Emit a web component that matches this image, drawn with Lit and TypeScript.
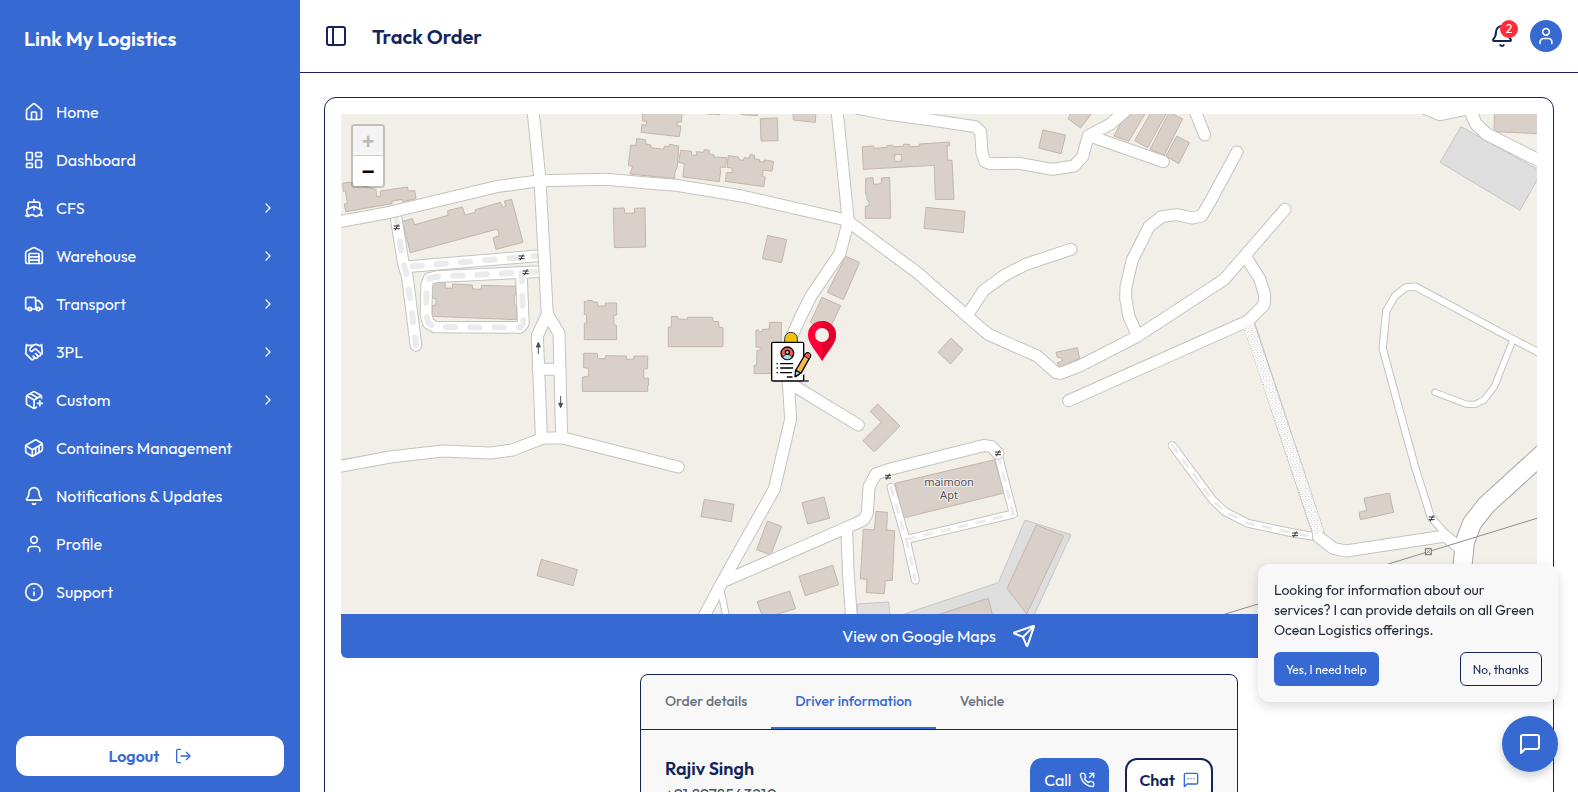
import { LitElement, html, svg, css } from "lit";
import { customElement, property, state } from "lit/decorators.js";
import { classMap } from "lit/directives/class-map.js";

const icons: Record<string, unknown> = {
  home: svg`<path d="M15 21v-8a1 1 0 0 0-1-1h-4a1 1 0 0 0-1 1v8"/><path d="M3 10a2 2 0 0 1 .709-1.528l7-6a2 2 0 0 1 2.582 0l7 6A2 2 0 0 1 21 10v9a2 2 0 0 1-2 2H5a2 2 0 0 1-2-2z"/>`,
  dashboard: svg`<rect width="7" height="9" x="3" y="3" rx="1"/><rect width="7" height="5" x="14" y="3" rx="1"/><rect width="7" height="9" x="14" y="12" rx="1"/><rect width="7" height="5" x="3" y="16" rx="1"/>`,
  ship: svg`<path d="M12 10.189V14"/><path d="M12 2v3"/><path d="M19 13V7a2 2 0 0 0-2-2H7a2 2 0 0 0-2 2v6"/><path d="M19.38 20A11.6 11.6 0 0 0 21 14l-8.188-3.639a2 2 0 0 0-1.624 0L3 14a11.6 11.6 0 0 0 2.81 7.76"/><path d="M2 21c.6.5 1.2 1 2.5 1 2.5 0 2.5-2 5-2 1.3 0 1.9.5 2.5 1s1.2 1 2.5 1c2.5 0 2.5-2 5-2 1.3 0 1.9.5 2.5 1"/>`,
  warehouse: svg`<path d="M18 21V10a1 1 0 0 0-1-1H7a1 1 0 0 0-1 1v11"/><path d="M22 19a2 2 0 0 1-2 2H4a2 2 0 0 1-2-2V8a2 2 0 0 1 1.132-1.803l7.95-3.974a2 2 0 0 1 1.837 0l7.948 3.974A2 2 0 0 1 22 8z"/><path d="M6 13h12"/><path d="M6 17h12"/>`,
  truck: svg`<path d="M14 18V6a2 2 0 0 0-2-2H4a2 2 0 0 0-2 2v11a1 1 0 0 0 1 1h2"/><path d="M15 18H9"/><path d="M19 18h2a1 1 0 0 0 1-1v-3.65a1 1 0 0 0-.22-.624l-3.48-4.35A1 1 0 0 0 17.52 8H14"/><circle cx="17" cy="18" r="2"/><circle cx="7" cy="18" r="2"/>`,
  handshake: svg`<path d="m11 17 2 2a1 1 0 1 0 3-3"/><path d="m14 14 2.5 2.5a1 1 0 1 0 3-3l-3.88-3.88a3 3 0 0 0-4.24 0l-.88.88a1 1 0 1 1-3-3l2.81-2.81a5.79 5.79 0 0 1 7.06-.87l.47.28a2 2 0 0 0 1.42.25L21 4"/><path d="m21 3 1 11h-2"/><path d="M3 3 2 14l6.5 6.5a1 1 0 1 0 3-3"/><path d="M3 4h8"/>`,
  package: svg`<path d="M16 16h6"/><path d="M19 13v6"/><path d="M21 10V8a2 2 0 0 0-1-1.73l-7-4a2 2 0 0 0-2 0l-7 4A2 2 0 0 0 3 8v8a2 2 0 0 0 1 1.73l7 4a2 2 0 0 0 2 0l2-1.14"/><path d="m7.5 4.27 9 5.15"/><path d="M3.29 7 12 12l8.71-5"/><path d="M12 22V12"/>`,
  container: svg`<path d="M22 7.7c0-.6-.4-1.2-.8-1.5l-6.3-3.9a1.72 1.72 0 0 0-1.7 0l-10.3 6c-.5.2-.9.8-.9 1.4v6.6c0 .5.4 1.2.8 1.5l6.3 3.9a1.72 1.72 0 0 0 1.7 0l10.3-6c.5-.3.9-1 .9-1.5Z"/><path d="M10 21.9V14L2.1 9.1"/><path d="m10 14 11.9-6.9"/><path d="M14 19.8v-8.1"/><path d="M18 17.5V9.4"/>`,
  bell: svg`<path d="M10.268 21a2 2 0 0 0 3.464 0"/><path d="M3.262 15.326A1 1 0 0 0 4 17h16a1 1 0 0 0 .74-1.673C19.41 13.956 18 12.499 18 8A6 6 0 0 0 6 8c0 4.499-1.411 5.956-2.738 7.326"/>`,
  user: svg`<path d="M19 21v-2a4 4 0 0 0-4-4H9a4 4 0 0 0-4 4v2"/><circle cx="12" cy="7" r="4"/>`,
  info: svg`<circle cx="12" cy="12" r="10"/><path d="M12 16v-4"/><path d="M12 8h.01"/>`,
  chevron: svg`<path d="m9 18 6-6-6-6"/>`,
  logout: svg`<path d="M8 2H4.500a2 2 0 0 0-2 2v16a2 2 0 0 0 2 2H8"/><path d="M9 12h13"/><path d="m17 6.500 5.500 5.500-5.500 5.500"/>`,
  panel: svg`<rect width="18" height="18" x="3" y="3" rx="2"/><path d="M9 3v18"/>`,
  send: svg`<path d="M14.536 21.686a.5.5 0 0 0 .937-.024l6.5-19a.496.496 0 0 0-.635-.635l-19 6.5a.5.5 0 0 0-.024.937l7.93 3.18a2 2 0 0 1 1.112 1.11z"/><path d="m21.854 2.147-10.94 10.939"/>`,
  phone: svg`<path d="m16 8 6-6"/><path d="M22 8V2h-6"/><path d="M22 16.92v3a2 2 0 0 1-2.18 2 19.79 19.79 0 0 1-8.63-3.07 19.5 19.5 0 0 1-6-6 19.79 19.79 0 0 1-3.07-8.67A2 2 0 0 1 4.11 2h3a2 2 0 0 1 2 1.72 12.84 12.84 0 0 0 .7 2.81 2 2 0 0 1-.45 2.11L8.09 9.91a16 16 0 0 0 6 6l1.27-1.27a2 2 0 0 1 2.11-.45 12.84 12.84 0 0 0 2.81.7A2 2 0 0 1 22 16.92z"/>`,
  message: svg`<path d="M21 15a2 2 0 0 1-2 2H7l-4 4V5a2 2 0 0 1 2-2h14a2 2 0 0 1 2 2z"/>`,
  messageDots: svg`<path d="M22 16a2 2 0 0 1-2 2H6l-4 4V4a2 2 0 0 1 2-2h16a2 2 0 0 1 2 2z"/><path d="M7.500 10h.01M12 10h.01M16.500 10h.01"/>`,
};

const icon = (name: string, size = 20) => html`<svg
  class="icon" width=${size} height=${size} viewBox="0 0 24 24" fill="none"
  stroke="currentColor" stroke-width="2" stroke-linecap="round"
  stroke-linejoin="round" aria-hidden="true">${icons[name]}</svg>`;

/* ---- Map geometry. One map unit is a third of a CSS pixel. ---- */

interface Road { d: string; w: number; edge?: string; butt?: boolean }

const roads: Road[] = [
  { w: 36, d: "990,670 1165,638 1490,560 1620,542 1820,538 1950,550 2030,556 2225,588 2526,657 2545,665 2752,818 2940,982 2965,1003 3038,1036 3112,1068 3168,1118 3182,1120 3243,1096 3410,1010 3672,839 3855,628" },
  { w: 36, d: "1597,310 1620,540 1642,945" },
  { w: 36, d: "1642,942 1612,1007 1624,1306" },
  { w: 36, d: "1642,942 1677,1000 1685,1313" },
  { w: 36, d: "1614,1108 1680,1108" },
  { w: 36, d: "1000,1403 1170,1371 1328,1353 1472,1359 1537,1350 1627,1315 1685,1313 2035,1401" },
  { w: 36, d: "2510,320 2545,665 2520,760 2433,888 2402,950 2375,1010 2362,1090 2365,1150 2372,1257 2323,1467 2170,1740 2095,1880" },
  { w: 36, d: "2370,1150 2575,1275" },
  { w: 36, d: "2180,1740 2535,1585 2590,1560 2602,1540 2607,1460 2628,1422 2665,1409 2953,1336 2975,1340 2994,1360" },
  { w: 35, d: "2540,1585 2545,1720 2555,1860" },
  { w: 20, d: "2162,1770 2185,1880" },
  { w: 36, d: "2560,322 2660,342 2780,358 2925,380 2942,395 2946,460 2955,485 2970,491 3057,490 3158,508 3222,498 3248,470 3265,407 3330,373 3385,325" },
  { w: 36, d: "3275,410 3490,485" },
  { w: 36, d: "3580,320 3614,405" },
  { w: 36, d: "3711,456 3637,593 3605,648 3577,654 3530,644 3485,650 3447,680 3396,782 3378,860 3377,895 3387,950 3411,1003" },
  { w: 36, d: "3213,748 3080,792 3015,825 2950,872 2907,938" },
  { w: 36, d: "3740,775 3780,838 3794,885 3792,915 3745,962 3206,1202" },
  { w: 36, d: "3955,1610 4000,1645 4038,1653 4335,1608 4375,1640" },
  { w: 22, d: "4340,1605 4292,1550 4245,1400 4190,1200 4148,1045 4159,932 4185,888 4218,862 4247,860 4540,1018 4630,1065" },
  { w: 19, d: "4538,1022 4483,1160 4452,1200 4425,1213 4400,1213 4305,1177" },
  { w: 38, d: "4240,310 4320,343 4420,322" },
  { w: 38, d: "4405,320 4428,372 4460,402 4640,493" },
  { w: 57, edge: "#a8a8a6", butt: true, d: "4650,1341 4458,1516 4416,1570 4395,1625 4383,1740" },
];

const serviceRoads: Road[] = [
  { w: 35, d: "1186,640 1210,790 1222,830 1248,1036" },
  { w: 35, d: "1225,800 1618,767" },
  { w: 35, d: "1618,815 1310,830 1287,836 1280,855 1278,945 1286,970 1305,981 1560,982 1570,970 1564,820" },
];

const lanes: Road[] = [
  { w: 24, d: "2673,1462 2720,1625 2746,1740" },
  { w: 24, d: "2720,1618 3040,1542 2996,1370" },
  { w: 24, d: "3517,1337 3638,1500 3675,1535 3744,1570 3880,1599 3945,1610" },
];

const blocks: { x: number; y: number; shapes: string[] }[] = [
  { x: 960, y: 0, shapes: [
    "68,550 88,547 168,568 170,590 182,588 181,573 262,561 265,573 284,572 288,596 248,605 248,598 216,603 216,611 77,635 73,612 82,608 76,572 70,574",
    "247,664 277,656 284,674 384,646 383,632 427,621 435,645 466,637 466,629 541,607 547,622 557,618 553,603 575,598 609,727 528,748 519,713 538,707 533,687 271,758",
    "337,847 375,848 376,864 397,865 398,852 457,855 458,867 484,868 485,856 588,859 587,885 582,886 584,915 590,916 590,959 337,949 337,916 348,915 348,896 337,895",
    "880,625 913,624 914,640 944,639 943,625 975,624 977,741 883,743",
    "793,905 800,905 802,901 817,902 819,906 832,906 834,918 856,918 856,909 890,909 890,945 881,946 882,975 889,976 890,1019 793,1019 793,970 800,968 800,945 793,943",
  ] },
  { x: 990, y: 900, shapes: [
    "761,160 802,160 803,176 826,176 827,167 889,168 890,178 911,178 912,168 953,168 953,206 941,207 941,234 956,235 955,257 953,257 953,274 757,274 757,232 776,228 776,205 761,203",
    "634,778 742,809 729,857 621,827",
  ] },
  { x: 1920, y: 270, shapes: [
    "8,60 127,60 124,96 112,96 111,107 123,109 118,140 3,127 6,103 18,106 21,94 8,93",
    "-10,146 16,149 18,162 33,165 33,173 70,178 74,168 86,170 88,163 116,168 112,230 105,245 103,266 -30,252 -22,230 -35,226 -28,165 -12,166",
    "122,181 154,184 155,195 170,196 170,185 190,187 193,179 208,181 207,192 222,194 222,201 260,203 257,232 240,231 242,242 238,275 129,261 133,221 116,217",
    "265,197 295,201 297,209 311,211 312,203 328,205 330,194 344,196 343,206 358,209 359,215 372,216 373,210 401,214 396,244 369,240 368,258 376,262 371,290 256,274 259,248 276,248 277,235 261,232",
    "361,86 412,84 414,152 363,153",
    "459,62 528,62 526,97 460,90",
    "200,60 240,60 240,74 200,72",
    "305,60 352,60 352,77 305,74",
    "667,170 701,168 702,175 740,172 742,167 758,165 760,170 790,169 791,163 808,163 810,170 837,169 838,162 928,156 929,167 921,168 923,211 936,211 942,328 886,328 883,226 670,238",
    "677,265 699,263 701,283 724,281 724,264 749,262 752,385 676,385 676,350 687,346 687,335 681,330 681,318 677,314",
    "858,352 975,364 970,428 852,415",
    "383,436 440,449 425,518 367,506",
    "617,499 659,517 610,629 562,607",
    "546,622 602,647 575,705 540,715 511,697",
    "94,680 112,679 114,687 142,688 143,682 218,682 219,694 236,695 237,712 249,713 249,770 85,770 85,712 94,711",
    "348,722 355,719 358,725 367,725 367,718 388,717 388,697 424,697 424,740 415,850 342,851 343,826 350,824 351,782 364,779 364,773 348,771",
    "933,744 969,778 932,822 894,787",
  ] },
  { x: 2940, y: 270, shapes: [
    "189,120 257,135 243,191 176,174",
    "264,86 275,65 335,70 302,114",
    "440,65 499,65 446,154 402,138",
    "514,65 562,65 503,173 464,152",
    "568,66 608,87 553,195 510,178",
    "590,138 628,158 596,221 558,198",
    "228,787 292,773 299,806 240,832 231,818 246,815 246,804 232,802",
  ] },
  { x: 1980, y: 900, shapes: [
    "653,312 720,378 643,456 609,422 663,367 631,334",
    "133,598 222,613 214,665 123,650",
    "426,608 492,591 509,655 443,672",
    "322,663 365,679 332,765 290,749",
    "417,829 518,796 536,854 436,887",
    "291,905 389,873 407,926 310,955",
    "648,634 682,637 680,690 704,692 697,841 676,842 673,881 619,878 621,838 601,836 610,688 643,690",
    "705,550 1004,479 1032,579 730,654",
    "1129,675 1211,708 1100,942 1041,865",
    "985,895 1000,955 800,955",
  ] },
  { x: 3720, y: 1200, shapes: ["372,295 448,279 461,337 361,359 357,337 380,331"] },
  { x: 3780, y: 0, shapes: ["704,330 702,395 840,401 840,330"] },
];

const parking = [
  "4383,380 4620,512 4611,540 4560,631 4320,487",
  "3075,1560 3213,1604 3100,1850 2690,1850 2995,1748",
  "2572,1812 2666,1806 2672,1860 2572,1860",
];

const gates = [[1190, 682], [1565, 772], [1577, 817], [2664, 1430], [2994, 1360], [3885, 1603], [4295, 1555]];

const casing = (r: Road) => svg`<polyline class=${classMap({ road: true, butt: !!r.butt })}
  points=${r.d} stroke=${r.edge ?? "#c3c3c1"} stroke-width=${r.w + 3}/>`;
const surface = (r: Road) => svg`<polyline class=${classMap({ road: true, butt: !!r.butt })}
  points=${r.d} stroke="#fff" stroke-width=${r.w - 3}/>`;

@customElement("track-map")
class TrackMap extends LitElement {
  static styles = css`
    :host { display: block; position: relative; height: 500px; background: #f1efe8; overflow: hidden; }
    * { box-sizing: border-box; }
    .canvas { display: block; width: 100%; height: 100%; }
    .road { fill: none; stroke-linecap: round; stroke-linejoin: round; }
    .butt { stroke-linecap: butt; }
    .building { fill: #d9d0c9; stroke: #c5b5aa; stroke-width: 3; }
    .parking { fill: #dedede; stroke: #c6c6c4; stroke-width: 3; }
    .dash { fill: none; stroke: #ebebeb; stroke-linejoin: round; }
    .label { font: 33px "Noto Sans", sans-serif; fill: #4d4d4d; text-anchor: middle;
      paint-order: stroke; stroke: rgba(255, 255, 255, 0.7); stroke-width: 6px; }
    .zoom { position: absolute; top: 10px; left: 10px; display: flex; flex-direction: column;
      border: 2px solid rgba(0, 0, 0, 0.2); border-radius: 4px; background-clip: padding-box; }
    .zoom button { width: 30px; height: 30px; padding: 6px 0 0; border: 0; background: #fff; color: #000;
      font: bold 22px/24px "Liberation Mono", monospace; cursor: pointer; }
    .zoom button:first-child { border-bottom: 1px solid #ccc; border-radius: 2px 2px 0 0; }
    .zoom button:last-child { border-radius: 0 0 2px 2px; }
    .zoom button:disabled { background: #f4f4f4; color: #bbb; cursor: default; }
  `;

  render() {
    return html`
      <svg class="canvas" viewBox="1023 342 3588 1500" preserveAspectRatio="xMidYMid slice" role="img" aria-label="Order location map">
        <defs>
          <pattern id="gravel" width="18" height="18" patternUnits="userSpaceOnUse">
            <rect width="18" height="18" fill="#fff"/>
            <g fill="#c6c6c6"><rect x="1" y="2" width="3" height="3"/><rect x="9" y="0" width="3" height="3"/><rect x="5" y="7" width="3" height="3"/><rect x="14" y="6" width="3" height="3"/><rect x="1" y="13" width="3" height="3"/><rect x="10" y="12" width="3" height="3"/></g>
          </pattern>
        </defs>
        ${parking.map((p) => svg`<polygon class="parking" points=${p}/>`)}
        ${blocks.map((b) => svg`<g transform="translate(${b.x} ${b.y})">${b.shapes.map((p) => svg`<polygon class="building" points=${p}/>`)}</g>`)}
        <rect x="2684" y="464" width="20" height="20" fill="#f1efe8" stroke="#c5b5aa" stroke-width="3"/>
        ${[...lanes, ...serviceRoads].map(casing)}
        ${[...lanes, ...serviceRoads].map(surface)}
        ${serviceRoads.map((r) => svg`<polyline class="dash" points=${r.d} stroke-width="18" stroke-linecap="round" stroke-dasharray="28 45" stroke-dashoffset="-12"/>`)}
        ${lanes.map((r) => svg`<polyline class="dash" points=${r.d} stroke-width="9" stroke-linecap="round" stroke-dasharray="24 30"/>`)}
        ${roads.map(casing)}
        <path d="M3748 975L3957 1605" stroke="#c3c3c1" stroke-width="38"/>
        ${roads.map(surface)}
        <path d="M3746 975L3956 1600" stroke="url(#gravel)" stroke-width="33"/>
        <path d="M4630 1549L4165 1692L3774 1812L3640 1853" fill="none" stroke="#8d8d8b" stroke-width="3"/>
        <g fill="#f1efe8" stroke="#777" stroke-width="3"><rect x="4276" y="1646" width="18" height="18"/><path d="M4278 1648l14 14M4292 1648l-14 14" stroke-width="2"/></g>
        ${gates.map(([x, y]) => svg`<g transform="translate(${x} ${y})" stroke="#333" stroke-width="3"><path d="M-9 -4H9M-9 4H9M-5 9L5 -9"/></g>`)}
        <g fill="#4f4f4f" stroke="#4f4f4f" stroke-width="3"><path d="M1615 1062V1030"/><path d="M1615 1027l6 14h-12z"/><path d="M1682 1188V1218"/><path d="M1682 1223l6-13h-12z"/></g>
        <text class="label" x="2847" y="1458">maimoon</text>
        <text class="label" x="2847" y="1498">Apt</text>
        <g>
          <path d="M2466 1083C2448 1052 2424 1031 2424 1005A42 42 0 0 1 2508 1005C2508 1031 2484 1052 2466 1083Z" fill="#ff003b"/>
          <path d="M2466 1083C2484 1052 2508 1031 2508 1005A42 42 0 0 0 2466 963Z" fill="#e3002c"/>
          <circle cx="2466" cy="1005" r="21" fill="#f4efe9"/>
        </g>
        <g transform="translate(2295 975)" stroke-linecap="round" stroke-linejoin="round">
          <path d="M59 56V41a19 19 0 0 1 38 0v15z" fill="#f4c20d" stroke="#26374a" stroke-width="3"/>
          <path d="M20 56q0-4 4-4h88q4 0 4 4v108q0 4-4 4H24q-4 0-4-4z" fill="#fff" stroke="#000" stroke-width="4"/>
          <circle cx="67" cy="85" r="19" fill="#ee5f59" stroke="#000" stroke-width="4"/>
          <path d="M53 97q4-9 14-9t14 9q-6 7-14 7t-14-7z" fill="#a7d9f5" stroke="#000" stroke-width="2"/>
          <circle cx="67" cy="82" r="6" fill="#f6c9a0" stroke="#000" stroke-width="4"/>
          <path d="M47 116h36M47 129h36M47 143h32M67 156h14M36 116h1M36 129h1M36 143h1" stroke="#000" stroke-width="4" fill="none"/>
          <path d="M116 114v32" stroke="#fff" stroke-width="6"/>
          <path d="M92 136l29-49q4-6 11-3q7 4 4 11l-27 48-17 12z" fill="#f8b84e" stroke="#000" stroke-width="4"/>
          <path d="M118 92l4-6q4-5 10-2q7 4 4 11l-3 6z" fill="#f0605a" stroke="#000" stroke-width="3"/>
          <path d="M92 136l16 8-18 11z" fill="#a7d9f5" stroke="#000" stroke-width="4"/>
          <path d="M116 168h14" stroke="#26374a" stroke-width="4"/>
        </g>
      </svg>
      <div class="zoom">
        <button type="button" disabled aria-label="Zoom in">+</button>
        <button type="button" aria-label="Zoom out">−</button>
      </div>
    `;
  }
}

const navItems: [string, string, boolean][] = [
  ["home", "Home", false],
  ["dashboard", "Dashboard", false],
  ["ship", "CFS", true],
  ["warehouse", "Warehouse", true],
  ["truck", "Transport", true],
  ["handshake", "3PL", true],
  ["package", "Custom", true],
  ["container", "Containers Management", false],
  ["bell", "Notifications & Updates", false],
  ["user", "Profile", false],
  ["info", "Support", false],
];

@customElement("app-root")
class AppRoot extends LitElement {
  @property() pageTitle = "Track Order";
  @state() private tab = 1;

  static styles = css`
    :host {
      --blue: #3669d2;
      --navy: #14245a;
      display: grid;
      grid-template-columns: 300px minmax(0, 1fr);
      height: 100vh;
      overflow: hidden;
      font: 16px/24px "Outfit", "Lato", sans-serif;
      color: var(--navy);
      background: #fff;
    }
    * { box-sizing: border-box; }
    button { font: inherit; color: inherit; cursor: pointer; }
    a { color: inherit; text-decoration: none; }
    .icon { flex: none; display: block; }

    .sidebar { display: flex; flex-direction: column; padding: 24px 16px 16px; background: var(--blue); color: #fff; }
    .brand { margin: 0 8px 34px; font-size: 20px; line-height: 30px; font-weight: 600; }
    .nav { display: flex; flex-direction: column; flex: 1; }
    .nav a { display: flex; align-items: center; gap: 12px; height: 48px; padding: 0 8px; }
    .nav .text { flex: 1; }
    .logout { display: flex; align-items: center; justify-content: center; gap: 16px; height: 40px; border: 0; border-radius: 12px; background: #fff; color: var(--blue); font-weight: 600; }

    .main { display: flex; flex-direction: column; min-height: 0; }
    .header { flex: none; display: flex; align-items: center; height: 73px; padding: 0 16px 0 24px; border-bottom: 1px solid var(--navy); }
    .header h1 { flex: 1; margin: 0 0 0 24px; font-size: 20px; line-height: 31px; font-weight: 600; }
    .plain { position: relative; padding: 0; border: 0; background: none; }
    .badge { position: absolute; top: -4px; right: -4px; width: 18px; height: 18px; border-radius: 9px; background: #fd2c36; color: #fff; font-size: 12px; line-height: 18px; text-align: center; }
    .avatar { display: grid; place-items: center; width: 32px; height: 32px; margin-left: 16px; padding: 0; border: 0; border-radius: 50%; background: var(--blue); color: #fff; }

    .content { flex: 1; min-height: 0; overflow: auto; scrollbar-width: none; padding: 24px; }
    .card { display: flex; flex-direction: column; padding: 16px; border: 1px solid var(--navy); border-radius: 12px; }
    .maps-link { display: flex; align-items: center; justify-content: center; gap: 16px; height: 44px; border-radius: 0 0 6px 6px; background: var(--blue); color: #fff; }
    .details { width: 50%; margin: 16px auto 0; border: 1px solid var(--navy); border-radius: 8px; background: #f8f8f8; }
    .tabs { display: flex; border-bottom: 1px solid var(--navy); }
    .tab { height: 54px; padding: 0 24px; border: 0; border-bottom: 2px solid transparent; background: none; color: #6b7280; font-size: 14px; font-weight: 500; }
    .tab.active { border-bottom-color: var(--blue); color: var(--blue); }
    .driver { display: flex; align-items: flex-start; gap: 16px; padding: 28px 24px; }
    .who { flex: 1; display: flex; flex-direction: column; gap: 2px; }
    .name { margin: 0; font-size: 18px; line-height: 22px; font-weight: 600; }
    .phone { color: #4b5563; }
    .action { display: flex; align-items: center; gap: 8px; height: 44px; padding: 0 14px; border: 0; border-radius: 12px; background: var(--blue); color: #fff; }
    .action.outline { padding: 0 12px; border: 2px solid var(--navy); background: #fff; color: var(--navy); font-weight: 600; }
    .action.outline .icon { color: var(--blue); }

    .popup { position: fixed; right: 20px; bottom: 90px; width: 300px; padding: 16px; border-radius: 12px; background: #f8f8f8; box-shadow: 0 4px 12px rgba(0, 0, 0, 0.15); color: #1f2937; }
    .popup p { margin: 0 0 12px; font-size: 14px; line-height: 20px; }
    .choices { display: flex; justify-content: space-between; }
    .choice { height: 34px; padding: 1px 12px 0; border: 0; border-radius: 6px; background: var(--blue); color: #fff; font-size: 12px; }
    .choice.outline { border: 1px solid var(--navy); background: none; color: var(--navy); }
    .fab { position: fixed; right: 20px; bottom: 20px; display: grid; place-items: center; width: 56px; height: 56px; padding: 0; border: 0; border-radius: 50%; background: var(--blue); color: #fff; box-shadow: 0 4px 10px rgba(0, 0, 0, 0.2); }
  `;

  render() {
    return html`
      <aside class="sidebar">
        <div class="brand">Link My Logistics</div>
        <nav class="nav">
          ${navItems.map(([glyph, label, more]) => html`
            <a href="#">${icon(glyph)}<span class="text">${label}</span>${more ? icon("chevron", 16) : ""}</a>`)}
        </nav>
        <button class="logout" type="button">Logout ${icon("logout", 16)}</button>
      </aside>
      <div class="main">
        <header class="header">
          <button class="plain" type="button" aria-label="Toggle sidebar">${icon("panel", 24)}</button>
          <h1>${this.pageTitle}</h1>
          <button class="plain" type="button" aria-label="Notifications">${icon("bell", 24)}<span class="badge">2</span></button>
          <button class="avatar" type="button" aria-label="Account">${icon("user", 20)}</button>
        </header>
        <main class="content">
          <section class="card">
            <track-map></track-map>
            <a class="maps-link" href="#">View on Google Maps ${icon("send", 24)}</a>
            <div class="details">
              <div class="tabs" role="tablist">
                ${["Order details", "Driver information", "Vehicle"].map((t, i) => html`
                  <button type="button" role="tab" class=${classMap({ tab: true, active: i === this.tab })}
                    aria-selected=${i === this.tab} @click=${() => (this.tab = i)}>${t}</button>`)}
              </div>
              <div class="driver">
                <div class="who">
                  <h2 class="name">Rajiv Singh</h2>
                  <span class="phone">+91 8978543210</span>
                </div>
                <button class="action" type="button">Call ${icon("phone", 16)}</button>
                <button class="action outline" type="button">Chat ${icon("messageDots", 16)}</button>
              </div>
            </div>
          </section>
        </main>
      </div>
      <div class="popup" role="dialog" aria-label="Assistant">
        <p>Looking for information about our services? I can provide details on all Green Ocean Logistics offerings.</p>
        <div class="choices">
          <button class="choice" type="button">Yes, I need help</button>
          <button class="choice outline" type="button">No, thanks</button>
        </div>
      </div>
      <button class="fab" type="button" aria-label="Open chat">${icon("message", 24)}</button>
    `;
  }
}
